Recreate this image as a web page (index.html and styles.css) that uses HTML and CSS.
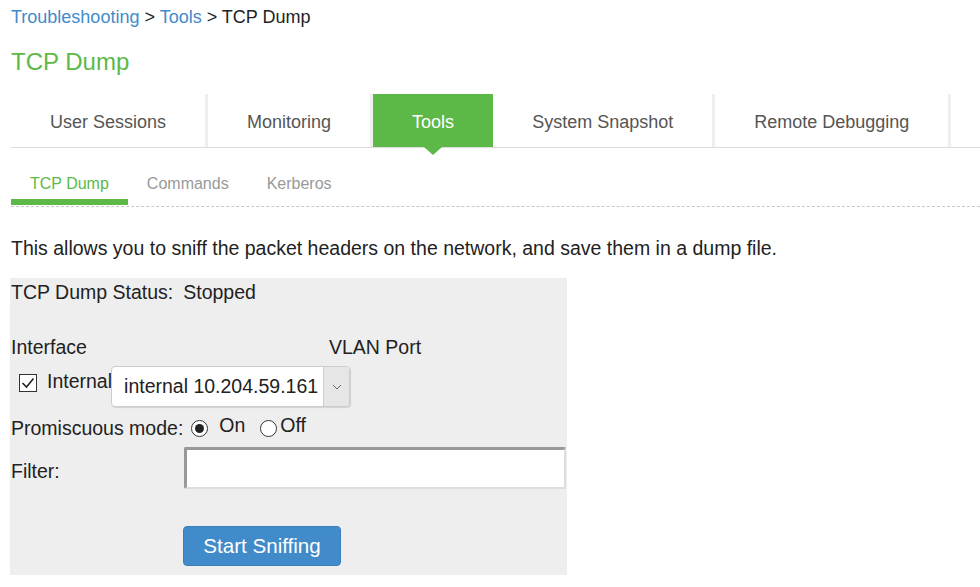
FILE: index.html
```html
<!DOCTYPE html>
<html>
<head>
<meta charset="utf-8">
<title>TCP Dump</title>
<link rel="stylesheet" href="styles.css">
</head>
<body>
<div class="page">
  <nav class="crumbs"><a href="#">Troubleshooting</a> &gt; <a href="#">Tools</a> &gt; <span class="cur">TCP Dump</span></nav>
  <h1 class="title">TCP Dump</h1>
  <ul class="tabs">
    <li class="tab">User Sessions</li>
    <li class="tab">Monitoring</li>
    <li class="tab active">Tools</li>
    <li class="tab">System Snapshot</li>
    <li class="tab">Remote Debugging</li>
  </ul>
  <ul class="subtabs">
    <li class="subtab active">TCP Dump</li>
    <li class="subtab">Commands</li>
    <li class="subtab">Kerberos</li>
  </ul>
  <p class="desc">This allows you to sniff the packet headers on the network, and save them in a dump file.</p>
  <div class="panel">
    <div class="status"><span>TCP Dump Status:</span><span class="status-val">Stopped</span></div>
    <div class="heads"><span>Interface</span><span>VLAN Port</span></div>
    <div class="iface">
      <span class="check"><svg width="16" height="16" viewBox="0 0 16 16"><polyline points="2.5,8 6.5,12 13.5,3.5" fill="none" stroke="#222" stroke-width="1.6"/></svg></span>
      <span class="iface-label">Internal</span>
      <div class="select">
        <span class="select-text">internal 10.204.59.161</span>
        <span class="select-arrow"><svg width="10" height="6" viewBox="0 0 10 6"><polyline points="1,1 5,5 9,1" fill="none" stroke="#666" stroke-width="1"/></svg></span>
      </div>
    </div>
    <div class="promisc">
      <span>Promiscuous mode:</span>
      <span class="radio radio-on checked"></span><span class="opt opt-on">On</span>
      <span class="radio radio-off"></span><span class="opt opt-off">Off</span>
    </div>
    <div class="filter">
      <label class="filter-label">Filter:</label>
      <div class="filter-input"></div>
    </div>
    <div class="actions">
      <button class="btn">Start Sniffing</button>
    </div>
  </div>
</div>
</body>
</html>
```
FILE: styles.css
```css
body {
  margin: 0;
  font-family: "Liberation Sans", Arial, sans-serif;
  color: #333;
  background: #fff;
}
.page {
  padding-left: 11px;
}
.crumbs {
  font-size: 18px;
  line-height: 34px;
  height: 34px;
  color: #222;
}
.crumbs a {
  color: #428bca;
  text-decoration: none;
}
.title {
  margin: 13px 0 0;
  font-size: 24px;
  line-height: 30px;
  font-weight: normal;
  color: #5cb947;
}
.tabs {
  margin: 17px 0 0;
  padding: 0;
  list-style: none;
  display: flex;
  border-bottom: 1px solid #ddd;
}
.tab {
  height: 53px;
  box-sizing: border-box;
  padding: 4px 39px 0;
  line-height: 49px;
  border-right: 3px solid #efefef;
  font-size: 18px;
  color: #555;
}
.tab.active {
  background: #5cb947;
  color: #fff;
  border-right: 0;
  padding: 4px 39px 0;
  position: relative;
}
.tab.active::after {
  content: "";
  position: absolute;
  left: 50%;
  top: 100%;
  margin-left: -9px;
  border-top: 8px solid #5cb947;
  border-left: 9px solid transparent;
  border-right: 9px solid transparent;
}
.subtabs {
  display: flex;
  margin: 0;
  padding: 0 0 1px;
  list-style: none;
  border-bottom: 1px dashed #c8c8c8;
}
.subtab {
  padding: 26px 19px 5px;
  line-height: 20px;
  font-size: 16px;
  color: #999;
  border-bottom: 6px solid transparent;
}
.subtab.active {
  color: #5cb947;
  border-bottom-color: #5cb947;
}
.desc {
  margin: 30px 0 0;
  font-size: 19.5px;
  line-height: 22px;
  color: #222;
}
.panel {
  margin: 19px 0 0 -1px;
  width: 556px;
  background: #eee;
  padding: 3px 0 9px 1px;
  font-size: 19.5px;
  line-height: 22px;
  color: #222;
}
.status {
  display: flex;
  height: 22px;
}
.status-val {
  margin-left: 10px;
}
.heads {
  display: grid;
  grid-template-columns: 318px auto;
  margin-top: 33px;
  height: 22px;
}
.iface {
  display: flex;
  align-items: flex-start;
  margin-top: 8px;
  height: 41px;
}
.check {
  width: 18px;
  height: 18px;
  box-sizing: border-box;
  border: 1px solid #333;
  background: #fff;
  margin: 8px 0 0 8px;
  display: flex;
  align-items: center;
  justify-content: center;
}
.iface-label {
  margin: 4px 0 0 10px;
}
.select {
  display: flex;
  width: 239px;
  height: 41px;
  box-sizing: border-box;
  border: 1px solid #ccc;
  border-radius: 4px;
  background: #fff;
  margin-left: -1px;
  box-shadow: 1px 1px 1px rgba(0,0,0,0.12);
}
.select-text {
  flex: 1;
  padding-left: 12px;
  line-height: 39px;
  white-space: nowrap;
}
.select-arrow {
  width: 25px;
  border-left: 1px solid #ccc;
  background: #e6e6e6;
  border-radius: 0 3px 3px 0;
  display: flex;
  align-items: center;
  justify-content: center;
}
.promisc {
  display: flex;
  align-items: center;
  margin-top: 10px;
  height: 22px;
}
.radio {
  width: 17px;
  height: 17px;
  box-sizing: border-box;
  border: 1px solid #333;
  border-radius: 50%;
  background: #fff;
  display: flex;
  align-items: center;
  justify-content: center;
}
.radio.checked::after {
  content: "";
  width: 9px;
  height: 9px;
  border-radius: 50%;
  background: #222;
}
.radio-on {
  margin-left: 8px;
}
.opt {
  margin-bottom: 6px;
}
.opt-on {
  margin-left: 11px;
}
.radio-off {
  margin-left: 15px;
}
.opt-off {
  margin-left: 3px;
}
.filter {
  display: flex;
  margin-top: 8px;
  height: 42px;
}
.filter-label {
  width: 173px;
  margin-top: 13px;
}
.filter-input {
  width: 382px;
  height: 42px;
  box-sizing: border-box;
  background: #fff;
  border-top: 3px solid #999;
  border-left: 3px solid #999;
  border-right: 2px solid #ddd;
  border-bottom: 2px solid #ddd;
  border-radius: 2px;
}
.actions {
  margin-top: 37px;
  padding-left: 172px;
  height: 40px;
}
.btn {
  width: 158px;
  height: 40px;
  background: #428bca;
  border: 1px solid #3a80bd;
  border-radius: 4px;
  color: #fff;
  font-family: "Liberation Sans", Arial, sans-serif;
  font-size: 20.6px;
  padding: 0;
}
```
